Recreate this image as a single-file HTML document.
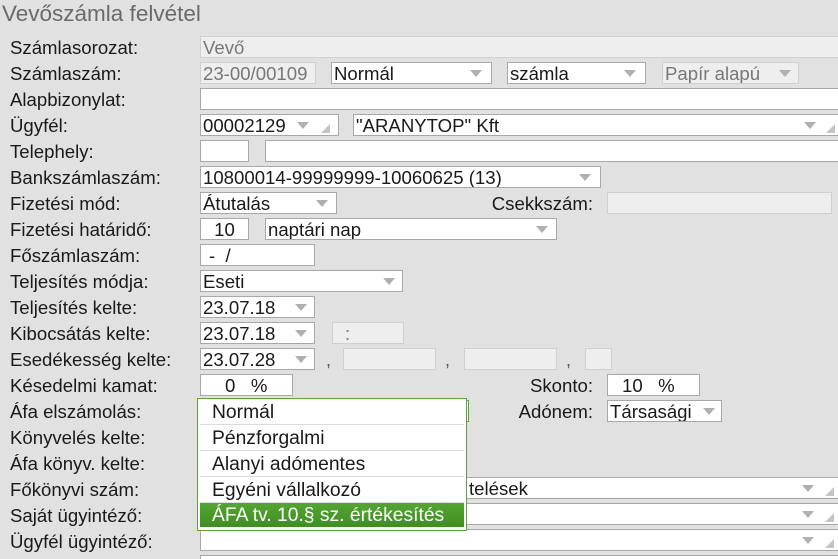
<!DOCTYPE html>
<html style="overflow:hidden"><head><meta charset="utf-8"><style>
html,body{overflow:hidden}
body{margin:0;width:838px;height:559px;background:#e1e1e1;font-family:"Liberation Sans",Arial,sans-serif;position:relative;color:#1a1a1a}
.t{position:absolute;left:2px;top:1px;font-size:22.5px;color:#6a6a6a}
.l{position:absolute;left:10px;font-size:18.6px;line-height:22px;top:0;white-space:nowrap}
.r{position:absolute;font-size:18.6px;line-height:22px;white-space:nowrap;text-align:right}
.f{position:absolute;height:20px;background:#fff;border:1px solid #a8a8a8;font-size:18.6px;line-height:21px;padding-left:2px;white-space:nowrap;overflow:hidden}
.d{background:#eeeeee;border-color:#cfcfcf;color:#777}
.a{position:absolute;top:7px;width:0;height:0;border-left:6px solid transparent;border-right:6px solid transparent;border-top:7px solid #b0b0b0}
.g{position:absolute;bottom:2px;width:0;height:0;border-left:9px solid transparent;border-bottom:9px solid #c4c4c4}
.c{position:absolute;font-size:18px;color:#555}
.dd{position:absolute;left:197px;top:398px;width:268px;height:131px;border:1px solid #5fa33f;background:#fff}
.dd div{height:25px;border-bottom:1px solid #dcdcdc;font-size:19.3px;line-height:27px;padding-left:12px;margin:0 2px;white-space:nowrap}
.dd .s{background:linear-gradient(#55a533,#3f8e22);color:#fff;border:none;height:24px;line-height:25px}
</style></head><body>
<div class="t">Vevőszámla felvétel</div>
<div class="l" style="top:37px">Számlasorozat:</div>
<div class="l" style="top:63px">Számlaszám:</div>
<div class="l" style="top:89px">Alapbizonylat:</div>
<div class="l" style="top:115px">Ügyfél:</div>
<div class="l" style="top:141px">Telephely:</div>
<div class="l" style="top:167px">Bankszámlaszám:</div>
<div class="l" style="top:193px">Fizetési mód:</div>
<div class="l" style="top:219px">Fizetési határidő:</div>
<div class="l" style="top:245px">Főszámlaszám:</div>
<div class="l" style="top:271px">Teljesítés módja:</div>
<div class="l" style="top:297px">Teljesítés kelte:</div>
<div class="l" style="top:323px">Kibocsátás kelte:</div>
<div class="l" style="top:349px">Esedékesség kelte:</div>
<div class="l" style="top:375px">Késedelmi kamat:</div>
<div class="l" style="top:401px">Áfa elszámolás:</div>
<div class="l" style="top:427px">Könyvelés kelte:</div>
<div class="l" style="top:453px">Áfa könyv. kelte:</div>
<div class="l" style="top:479px">Főkönyvi szám:</div>
<div class="l" style="top:505px">Saját ügyintéző:</div>
<div class="l" style="top:531px">Ügyfél ügyintéző:</div>

<div class="f d" style="left:200px;top:36px;width:640px">Vevő</div>
<div class="f d" style="left:200px;top:62px;width:112px">23-00/00109</div>
<div class="f" style="left:331px;top:62px;width:157px">Normál<i class="a" style="left:138px"></i></div>
<div class="f" style="left:507px;top:62px;width:135px">számla<i class="a" style="left:116px"></i></div>
<div class="f d" style="left:662px;top:62px;width:133px">Papír alapú<i class="a" style="left:116px"></i></div>
<div class="f" style="left:200px;top:88px;width:640px"></div>
<div class="f" style="left:200px;top:114px;width:135px">00002129<i class="a" style="left:96px"></i><i class="g" style="left:120px"></i></div>
<div class="f" style="left:353px;top:114px;width:490px">"ARANYTOP" Kft<i class="a" style="left:450px"></i><i class="g" style="left:472px"></i></div>
<div class="f" style="left:200px;top:140px;width:45px"></div>
<div class="f" style="left:265px;top:140px;width:580px"></div>
<div class="f" style="left:200px;top:166px;width:397px">10800014-99999999-10060625 (13)<i class="a" style="left:378px"></i></div>
<div class="f" style="left:200px;top:192px;width:133px">Átutalás<i class="a" style="left:115px"></i></div>
<div class="r" style="left:460px;top:193px;width:133px">Csekkszám:</div>
<div class="f d" style="left:607px;top:192px;width:221px"></div>
<div class="f" style="left:200px;top:218px;width:47px;text-align:center;padding-left:0">10</div>
<div class="f" style="left:265px;top:218px;width:288px">naptári nap<i class="a" style="left:270px"></i></div>
<div class="f" style="left:200px;top:244px;width:105px;padding-left:8px">-&nbsp; /</div>
<div class="f" style="left:200px;top:270px;width:199px">Eseti<i class="a" style="left:182px"></i></div>
<div class="f" style="left:200px;top:296px;width:111px">23.07.18<i class="a" style="left:94px"></i></div>
<div class="f" style="left:200px;top:322px;width:111px">23.07.18<i class="a" style="left:94px"></i></div>
<div class="f d" style="left:332px;top:322px;width:58px;padding-left:12px">:</div>
<div class="f" style="left:200px;top:348px;width:111px">23.07.28<i class="a" style="left:94px"></i></div>
<div class="c" style="left:326px;top:350px">,</div>
<div class="f d" style="left:343px;top:348px;width:89px"></div>
<div class="c" style="left:445px;top:350px">,</div>
<div class="f d" style="left:464px;top:348px;width:89px"></div>
<div class="c" style="left:566px;top:350px">,</div>
<div class="f d" style="left:585px;top:348px;width:23px"></div>
<div class="f" style="left:200px;top:374px;width:67px;padding-left:24px">0&nbsp;&nbsp;&nbsp;%</div>
<div class="r" style="left:460px;top:375px;width:133px">Skonto:</div>
<div class="f" style="left:607px;top:374px;width:77px;padding-left:14px">10&nbsp;&nbsp;&nbsp;%</div>
<div class="f" style="left:200px;top:400px;width:265px;border-color:#5fa33f"></div>
<div class="r" style="left:460px;top:401px;width:133px">Adónem:</div>
<div class="f" style="left:607px;top:400px;width:111px">Társasági<i class="a" style="left:95px"></i></div>
<div class="f" style="left:200px;top:477px;width:640px"><span style="position:absolute;left:268px">telések</span><i class="a" style="left:601px"></i><i class="g" style="left:624px"></i></div>
<div class="f" style="left:200px;top:503px;width:640px"><i class="a" style="left:601px"></i><i class="g" style="left:624px"></i></div>
<div class="f" style="left:200px;top:529px;width:640px"><i class="a" style="left:601px"></i><i class="g" style="left:624px"></i></div>
<div class="f" style="left:200px;top:555px;width:640px"></div>

<div class="dd">
<div>Normál</div>
<div>Pénzforgalmi</div>
<div>Alanyi adómentes</div>
<div>Egyéni vállalkozó</div>
<div class="s">ÁFA tv. 10.§ sz. értékesítés</div>
</div>
</body></html>
